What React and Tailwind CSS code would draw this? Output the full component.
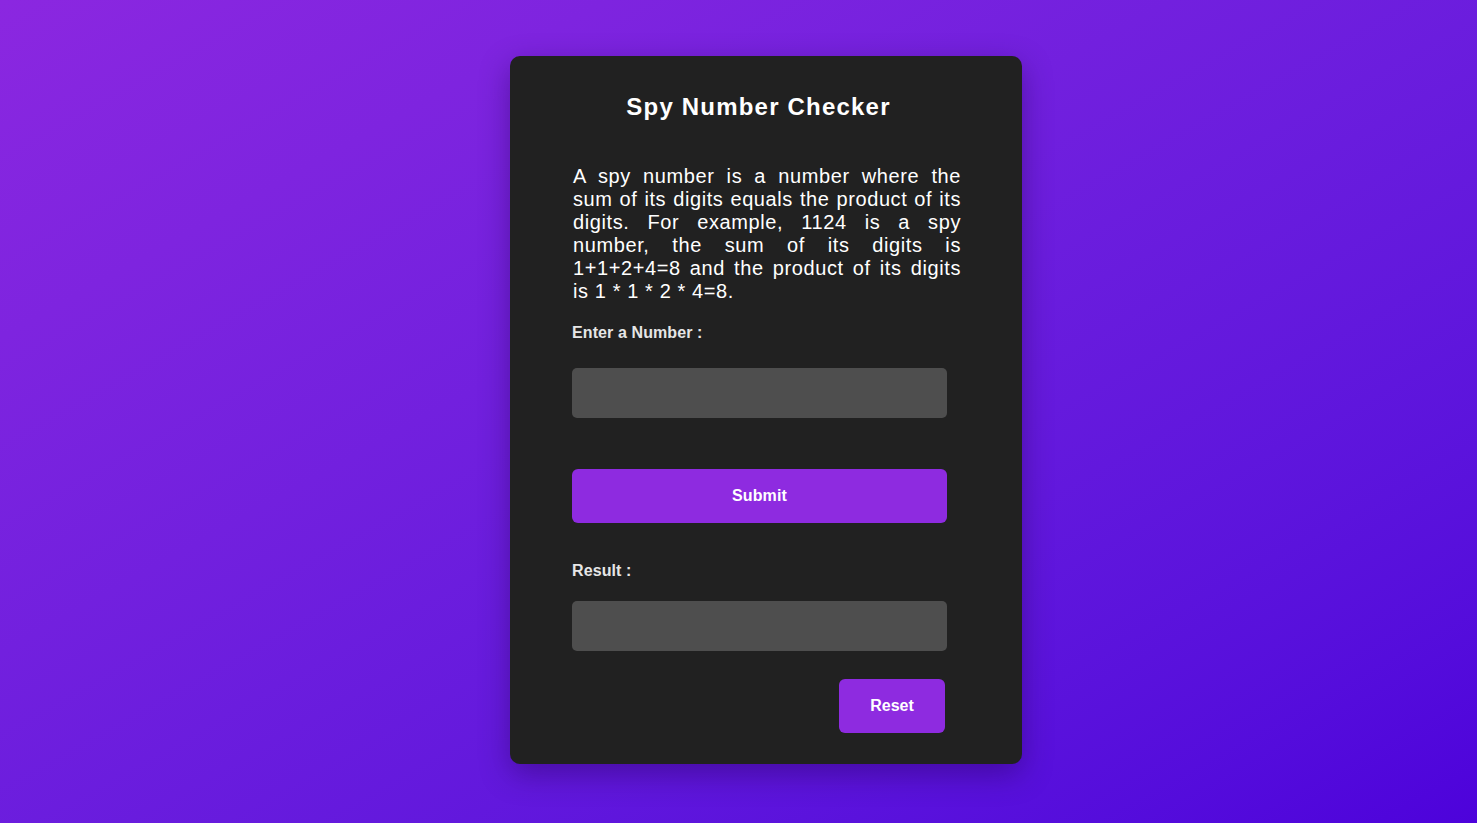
export default function App() {
  return (
    <div
      className="min-h-screen w-full bg-linear-to-br from-[#8b27e0] to-[#4d02db] flex justify-center pt-[56px] pl-[55px]"
      style={{ fontFamily: '"Liberation Sans", Arial, sans-serif' }}
    >
      <div className="w-[512px] h-[708px] bg-[#212121] rounded-[10px] shadow-[0_10px_30px_rgba(40,0,90,0.45)] pt-[37px] px-[62px] flex flex-col">
        <h1 className="w-[373px] text-center text-white font-bold text-[24px] leading-[28px] tracking-[1.2px]">
          Spy Number Checker
        </h1>

        <p className="mt-[44px] ml-px w-[388px] text-white text-[20px] leading-[23px] tracking-[0.6px] text-justify">
          A spy number is a number where the sum of its digits equals the product of its digits. For example, 1124 is a spy number, the sum of its digits is 1+1+2+4=8 and the product of its digits is 1 * 1 * 2 * 4=8.
        </p>

        <label className="mt-[21px] text-[#e6e6e6] font-bold text-[16px] leading-[18px] tracking-[0.1px]">
          Enter a Number :
        </label>
        <input
          type="text"
          className="mt-[26px] w-[375px] h-[50px] rounded-[5px] bg-[#4e4e4e] outline-none px-3 text-white"
        />

        <button className="mt-[51px] w-[375px] h-[54px] rounded-[6px] bg-[#8e2be0] text-white font-bold text-[16px] tracking-[0.1px]">
          Submit
        </button>

        <label className="mt-[39px] text-[#e6e6e6] font-bold text-[16px] leading-[18px] tracking-[0.1px]">
          Result :
        </label>
        <div className="mt-[21px] w-[375px] h-[50px] rounded-[5px] bg-[#4e4e4e]" />

        <div className="mt-[28px] w-[373px] flex justify-end">
          <button className="w-[106px] h-[54px] rounded-[6px] bg-[#8e2be0] text-white font-bold text-[16px]">
            Reset
          </button>
        </div>
      </div>
    </div>
  );
}
